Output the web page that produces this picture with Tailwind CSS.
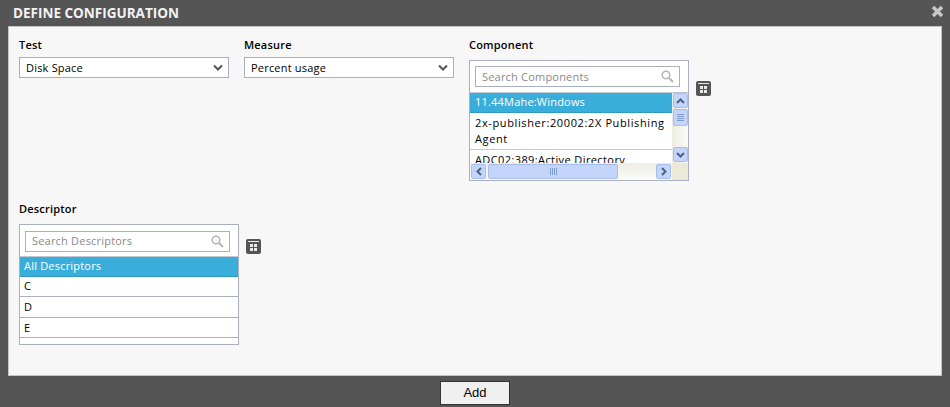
<!DOCTYPE html>
<html lang="en">
<head>
    <meta charset="UTF-8">
    <title>Define Configuration</title>
    <script src="https://cdn.jsdelivr.net/npm/@tailwindcss/browser@4"></script>
</head>
<body class="w-[950px] h-[407px] overflow-hidden bg-[#555555] font-['Open_Sans',sans-serif] text-[11px] tracking-[0.2px] text-black">
    <header class="h-[26px] pl-[13px] pr-[6px] flex justify-between items-center">
        <h1 class="text-[13.5px] tracking-normal font-bold text-[#f2f2f2]">DEFINE CONFIGURATION</h1>
        <svg class="w-[13px] h-[13px] mb-[3px]" viewBox="0 0 13 13"><path d="M2 2l9 9M11 2l-9 9" stroke="#c8c8c8" stroke-width="3.500"/></svg>
    </header>

    <main class="mx-[8px] h-[350px] bg-[#f7f7f7] border border-[#c4c4c4] pl-[10px] pt-[11px]">
        <div class="flex h-[154px]">
            <div class="w-[225px]">
                <label class="block h-[19px] font-semibold leading-[14px]">Test</label>
                <div class="w-[210px] h-[21px] pt-[2px] bg-white border border-[#abb0c0] pl-[6px] pr-[5px] flex justify-between items-center">
                    <span>Disk Space</span>
                    <svg class="w-[10px] h-[7px] -mt-[2px]" viewBox="0 0 10 7"><path d="M1 1.500l4 4 4-4" fill="none" stroke="#555" stroke-width="2"/></svg>
                </div>
            </div>
            <div class="w-[225px]">
                <label class="block h-[19px] font-semibold leading-[14px]">Measure</label>
                <div class="w-[210px] h-[21px] pt-[2px] bg-white border border-[#abb0c0] pl-[6px] pr-[5px] flex justify-between items-center">
                    <span>Percent usage</span>
                    <svg class="w-[10px] h-[7px] -mt-[2px]" viewBox="0 0 10 7"><path d="M1 1.500l4 4 4-4" fill="none" stroke="#555" stroke-width="2"/></svg>
                </div>
            </div>
            <div class="w-[260px]">
                <label class="block h-[22px] font-semibold leading-[14px]">Component</label>
                <div class="flex items-start gap-[7px]">
                    <div class="relative w-[220px] h-[121px] bg-white border border-[#abb0c0] overflow-hidden">
                        <div class="h-[32px] px-[5px] pt-[5px] border-b border-[#c4c8d2]">
                            <div class="w-[205px] h-[21px] pt-[2px] border border-[#abb0c0] pl-[6px] pr-[5px] flex justify-between items-center text-[#8a8a8a]">
                                <span>Search Components</span>
                                <svg class="w-[13px] h-[13px] -mt-[2px]" viewBox="0 0 13 13"><circle cx="5" cy="5" r="3.800" fill="none" stroke="#b5b5b5" stroke-width="1.500"/><path d="M8 8l4 4" stroke="#b5b5b5" stroke-width="2"/></svg>
                            </div>
                        </div>
                        <div class="w-[202px]">
                            <div class="h-[20px] pl-[5px] bg-[#3aaedb] border-b border-[#2e9bc7] text-white leading-[17px]">11.44Mahe:Windows</div>
                            <div class="h-[37px] pl-[5px] pt-[2px] border-b border-[#c4c8d2] leading-[16px] tracking-[0.62px]">2x-publisher:20002:2X Publishing Agent</div>
                            <div class="pl-[5px] pt-[2px] leading-[16px] tracking-[0.4px] whitespace-nowrap">ADC02:389:Active Directory</div>
                        </div>
                        <!-- vertical scrollbar -->
                        <div class="absolute right-0 top-[32px] w-[16px] h-[70px] bg-gradient-to-r from-[#eeede5] to-[#fbfbf8] flex flex-col justify-between">
                            <div>
                                <div class="w-[15px] h-[15px] ml-[1px] bg-[#c3d5fb] border border-[#a5bdef] rounded-[2px] flex items-center justify-center">
                                    <svg class="w-[9px] h-[6px]" viewBox="0 0 9 6"><path d="M1 5l3.500-3.500L8 5" fill="none" stroke="#4d6185" stroke-width="2"/></svg>
                                </div>
                                <div class="w-[15px] h-[17px] ml-[1px] mt-[1px] bg-[#c3d5fb] border border-[#a5bdef] rounded-[2px] flex flex-col items-center justify-center gap-[1px]">
                                    <i class="block w-[7px] h-[1px] bg-[#7f9bd0]"></i><i class="block w-[7px] h-[1px] bg-[#7f9bd0]"></i><i class="block w-[7px] h-[1px] bg-[#7f9bd0]"></i><i class="block w-[7px] h-[1px] bg-[#7f9bd0]"></i>
                                </div>
                            </div>
                            <div class="w-[15px] h-[15px] ml-[1px] mb-[1px] bg-[#c3d5fb] border border-[#a5bdef] rounded-[2px] flex items-center justify-center">
                                <svg class="w-[9px] h-[6px]" viewBox="0 0 9 6"><path d="M1 1l3.500 3.500L8 1" fill="none" stroke="#4d6185" stroke-width="2"/></svg>
                            </div>
                        </div>
                        <!-- horizontal scrollbar -->
                        <div class="absolute left-0 bottom-0 w-[202px] h-[17px] bg-gradient-to-b from-[#eeede5] to-[#fbfbf8] flex items-center">
                            <div class="w-[15px] h-[15px] ml-[1px] bg-[#c3d5fb] border border-[#a5bdef] rounded-[2px] flex items-center justify-center">
                                <svg class="w-[6px] h-[9px]" viewBox="0 0 6 9"><path d="M5 1L1.500 4.500 5 8" fill="none" stroke="#4d6185" stroke-width="2"/></svg>
                            </div>
                            <div class="w-[130px] h-[15px] ml-[2px] bg-[#c3d5fb] border border-[#a5bdef] rounded-[2px] flex items-center justify-center gap-[1px]">
                                <i class="block w-[1px] h-[7px] bg-[#7f9bd0]"></i><i class="block w-[1px] h-[7px] bg-[#7f9bd0]"></i><i class="block w-[1px] h-[7px] bg-[#7f9bd0]"></i><i class="block w-[1px] h-[7px] bg-[#7f9bd0]"></i>
                            </div>
                            <div class="w-[15px] h-[15px] ml-auto mr-[1px] bg-[#c3d5fb] border border-[#a5bdef] rounded-[2px] flex items-center justify-center">
                                <svg class="w-[6px] h-[9px]" viewBox="0 0 6 9"><path d="M1 1l3.500 3.500L1 8" fill="none" stroke="#4d6185" stroke-width="2"/></svg>
                            </div>
                        </div>
                        <div class="absolute right-0 bottom-0 w-[16px] h-[17px] bg-[#ece9d8]"></div>
                    </div>
                    <svg class="w-[15px] h-[15px] mt-[21px]" viewBox="0 0 15 15"><rect width="15" height="15" rx="2" fill="#555"/><path d="M2 2.500h11" stroke="#e8e8e8"/><rect x="4" y="5" width="7" height="7" fill="#e8e8e8"/><path d="M7.500 5v7M4 8.500h7" stroke="#555"/></svg>
                </div>
            </div>
        </div>

        <label class="block h-[18px] font-semibold leading-[14px] mt-[10px]">Descriptor</label>
        <div class="flex items-start gap-[7px] mt-[4px]">
            <div class="w-[220px] h-[121px] bg-white border border-[#abb0c0] overflow-hidden">
                <div class="h-[32px] px-[5px] pt-[6px] border-b border-[#c4c8d2]">
                    <div class="w-[205px] h-[21px] border border-[#abb0c0] pl-[6px] pr-[5px] flex justify-between items-center text-[#8a8a8a]">
                        <span>Search Descriptors</span>
                        <svg class="w-[13px] h-[13px]" viewBox="0 0 13 13"><circle cx="5" cy="5" r="3.800" fill="none" stroke="#b5b5b5" stroke-width="1.500"/><path d="M8 8l4 4" stroke="#b5b5b5" stroke-width="2"/></svg>
                    </div>
                </div>
                <div class="h-[20px] pl-[4px] bg-[#3aaedb] border-b border-[#2e9bc7] text-white leading-[17px]">All Descriptors</div>
                <div class="h-[20px] pl-[4px] border-b border-[#abb0c0] leading-[17px]">C</div>
                <div class="h-[21px] pl-[4px] border-b border-[#abb0c0] leading-[20px]">D</div>
                <div class="h-[20px] pl-[4px] border-b border-[#abb0c0] leading-[19px]">E</div>
            </div>
            <svg class="w-[15px] h-[15px] mt-[15px]" viewBox="0 0 15 15"><rect width="15" height="15" rx="2" fill="#555"/><path d="M2 2.500h11" stroke="#e8e8e8"/><rect x="4" y="5" width="7" height="7" fill="#e8e8e8"/><path d="M7.500 5v7M4 8.500h7" stroke="#555"/></svg>
        </div>
    </main>

    <div class="flex justify-center pt-[5px]">
        <button class="w-[70px] h-[24px] bg-[#f0f0f0] border border-[#333] font-['Liberation_Sans',sans-serif] text-[13px] tracking-normal">Add</button>
    </div>
</body>
</html>
